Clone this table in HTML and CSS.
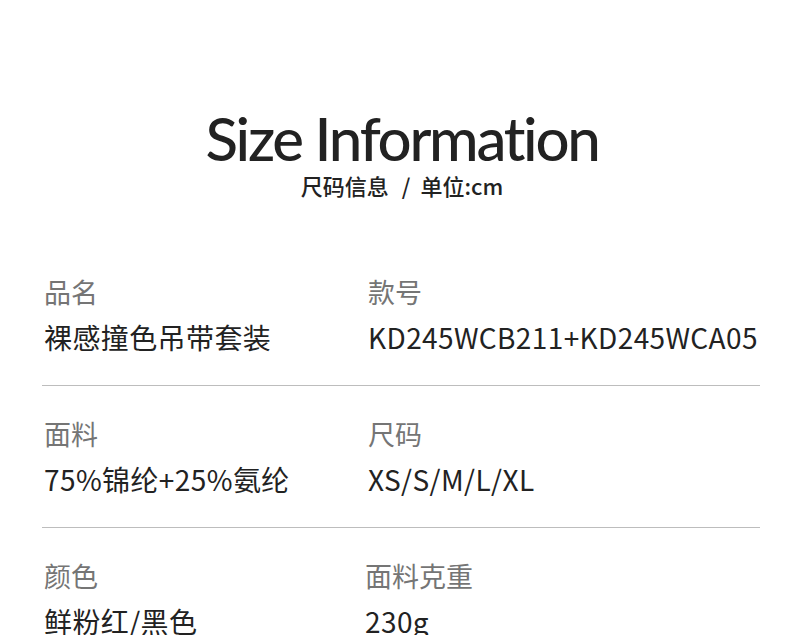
FILE: index.html
```html
<!DOCTYPE html>
<html lang="zh-CN">
<head>
    <meta charset="UTF-8">
    <meta name="viewport" content="width=device-width, initial-scale=1.0">
    <title>Size Information</title>
    <link rel="stylesheet" href="styles.css">
</head>
<body>
    <header class="page-head">
        <h1 class="title">Size Information</h1>
        <p class="subtitle">尺码信息<span class="sep">/</span>单位:cm</p>
    </header>
    <main class="spec">
        <section class="spec-row">
            <div class="spec-cell">
                <p class="spec-label">品名</p>
                <p class="spec-value">裸感撞色吊带套装</p>
            </div>
            <div class="spec-cell">
                <p class="spec-label">款号</p>
                <p class="spec-value">KD245WCB211+KD245WCA05</p>
            </div>
        </section>
        <section class="spec-row">
            <div class="spec-cell">
                <p class="spec-label">面料</p>
                <p class="spec-value">75%锦纶+25%氨纶</p>
            </div>
            <div class="spec-cell">
                <p class="spec-label">尺码</p>
                <p class="spec-value">XS/S/M/L/XL</p>
            </div>
        </section>
        <section class="spec-row last">
            <div class="spec-cell">
                <p class="spec-label">颜色</p>
                <p class="spec-value">鲜粉红/黑色</p>
            </div>
            <div class="spec-cell shift">
                <p class="spec-label">面料克重</p>
                <p class="spec-value">230g</p>
            </div>
        </section>
    </main>
</body>
</html>
```

FILE: styles.css
```css
* {
    box-sizing: border-box;
}

body {
    margin: 0;
    padding: 0;
    background-color: #ffffff;
    color: #222222;
    font-family: "Noto Sans CJK SC", sans-serif;
    overflow: hidden;
}

.page-head {
    text-align: center;
    padding: 106px 0 0 14px;
    height: 244px;
}

.title {
    margin: 0;
    font-family: Lato, "Noto Sans", sans-serif;
    font-weight: 500;
    font-size: 60px;
    line-height: 64px;
    letter-spacing: -2.3px;
    color: #222222;
}

.subtitle {
    margin: 0;
    font-size: 22px;
    line-height: 30px;
    font-weight: 500;
    color: #222222;
}

.sep {
    margin: 0 10px 0 13px;
}

.spec {
    margin: 0 30px 0 42px;
}

.spec-row {
    display: grid;
    grid-template-columns: 324px 1fr;
    padding: 30px 0 28px 2px;
    border-bottom: 1px solid #bdbdbd;
}

.spec-row.last {
    border-bottom: none;
}

.spec-label {
    margin: 0;
    font-size: 27px;
    line-height: 36px;
    color: #757575;
}

.spec-value {
    margin: 7px 0 0;
    font-size: 28px;
    line-height: 40px;
    letter-spacing: 0.4px;
    color: #222222;
}

.shift {
    margin-left: -3px;
}
```
